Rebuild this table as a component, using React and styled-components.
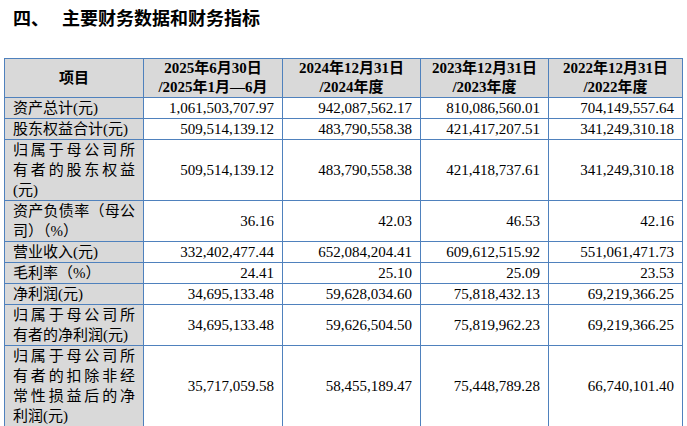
import React from 'react';
import styled, { createGlobalStyle } from 'styled-components';

const GlobalStyle = createGlobalStyle`
  html, body {
    margin: 0;
    padding: 0;
    background: #fff;
  }
  body {
    font-family: "Liberation Serif", "Noto Sans CJK SC", serif;
    color: #000;
  }
`;

const headers = [
  ['2025年6月30日', '/2025年1月—6月'],
  ['2024年12月31日', '/2024年度'],
  ['2023年12月31日', '/2023年度'],
  ['2022年12月31日', '/2022年度'],
];

const rows = [
  {
    label: ['资产总计(元)'],
    values: ['1,061,503,707.97', '942,087,562.17', '810,086,560.01', '704,149,557.64'],
  },
  {
    label: ['股东权益合计(元)'],
    values: ['509,514,139.12', '483,790,558.38', '421,417,207.51', '341,249,310.18'],
  },
  {
    label: ['归属于母公司所', '有者的股东权益', '(元)'],
    values: ['509,514,139.12', '483,790,558.38', '421,418,737.61', '341,249,310.18'],
  },
  {
    label: ['资产负债率（母公', '司）（%）'],
    values: ['36.16', '42.03', '46.53', '42.16'],
  },
  {
    label: ['营业收入(元)'],
    values: ['332,402,477.44', '652,084,204.41', '609,612,515.92', '551,061,471.73'],
  },
  {
    label: ['毛利率（%）'],
    values: ['24.41', '25.10', '25.09', '23.53'],
  },
  {
    label: ['净利润(元)'],
    values: ['34,695,133.48', '59,628,034.60', '75,818,432.13', '69,219,366.25'],
  },
  {
    label: ['归属于母公司所', '有者的净利润(元)'],
    values: ['34,695,133.48', '59,626,504.50', '75,819,962.23', '69,219,366.25'],
  },
  {
    label: ['归属于母公司所', '有者的扣除非经', '常性损益后的净', '利润(元)'],
    values: ['35,717,059.58', '58,455,189.47', '75,448,789.28', '66,740,101.40'],
  },
];

const colWidths = [139, 139, 138, 128, 134];

const App = () => (
  <>
    <GlobalStyle />
    <Page>
      <Title>
        <span>四、</span>
        <span>主要财务数据和财务指标</span>
      </Title>

      <Table>
        <colgroup>
          {colWidths.map((w, i) => (
            <col key={i} style={{ width: w }} />
          ))}
        </colgroup>
        <thead>
          <tr>
            <HeadCell>项目</HeadCell>
            {headers.map((h) => (
              <HeadCell key={h[0]}>
                {h.map((line) => (
                  <Line key={line}>{line}</Line>
                ))}
              </HeadCell>
            ))}
          </tr>
        </thead>
        <tbody>
          {rows.map((row) => (
            <tr key={row.label.join('')}>
              <LabelCell>
                {row.label.map((line, i) => (
                  <Line key={i} $justify={row.label.length > 1 && i < row.label.length - 1}>
                    {line}
                  </Line>
                ))}
              </LabelCell>
              {row.values.map((v, i) => (
                <ValueCell key={i}>{v}</ValueCell>
              ))}
            </tr>
          ))}
          <tr>
            <LabelCell>
              <Line>&nbsp;</Line>
            </LabelCell>
            <ValueCell />
            <ValueCell />
            <ValueCell />
            <ValueCell />
          </tr>
        </tbody>
      </Table>
    </Page>
  </>
);

const Page = styled.div`
  width: 687px;
  height: 426px;
  overflow: hidden;
  padding: 0 0 0 4px;
  box-sizing: border-box;
`;

const Title = styled.h2`
  display: flex;
  gap: 13px;
  margin: 8px 0 0 9px;
  font-family: "Noto Sans CJK SC", sans-serif;
  font-size: 18px;
  line-height: 18px;
  font-weight: 700;
  color: #000;
`;

const Table = styled.table`
  margin-top: 32px;
  width: 678px;
  table-layout: fixed;
  border-collapse: collapse;
  font-size: 15px;

  td,
  th {
    border: 1px solid #4f81bd;
    padding: 0 8px;
    line-height: 20px;
  }
`;

const HeadCell = styled.th`
  background: #d9d9d9;
  text-align: center;
  vertical-align: middle;
  font-weight: 700;
  font-family: "Liberation Serif", "Noto Sans CJK SC", serif;

  && {
    line-height: 19px;
  }
`;

const LabelCell = styled.td`
  background: #d9d9d9;
  text-align: left;
  vertical-align: middle;
  white-space: nowrap;
`;

const ValueCell = styled.td`
  background: #fff;
  text-align: right;
  vertical-align: middle;
  white-space: nowrap;
`;

const Line = styled.span`
  display: block;
  text-align: ${(p) => (p.$justify ? 'justify' : 'inherit')};
  text-align-last: ${(p) => (p.$justify ? 'justify' : 'auto')};
`;

export default App;
